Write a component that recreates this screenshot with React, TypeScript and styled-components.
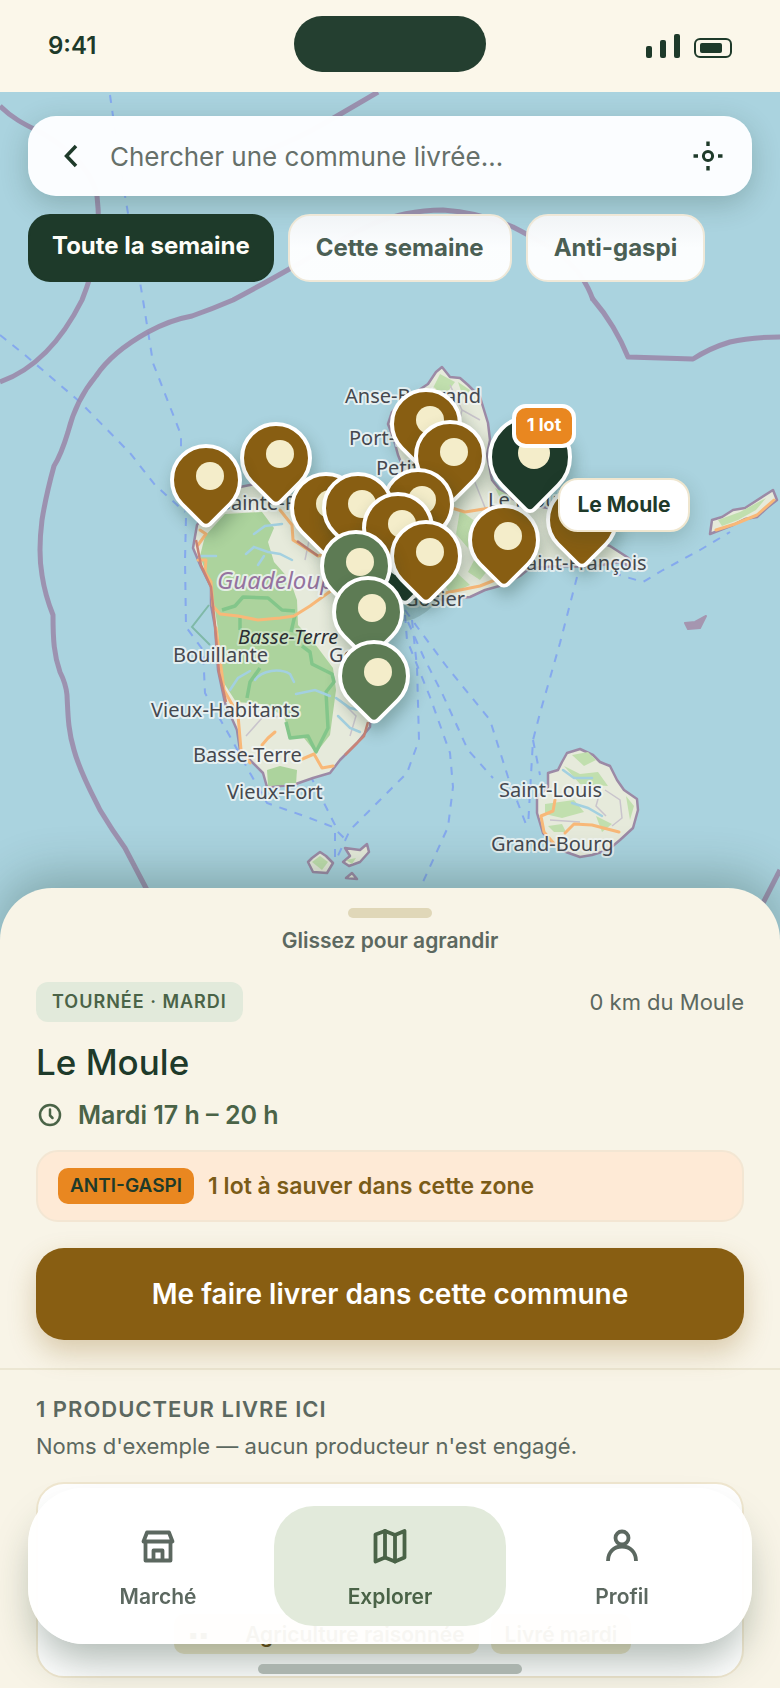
import React from "react";
import styled, { createGlobalStyle, css } from "styled-components";

const color = {
  cream: "#fbf7ea",
  sheet: "#f8f4e7",
  forest: "#1e3a2a",
  moss: "#4a6347",
  slate: "#5c6860",
  brown: "#885e12",
  leaf: "#5d7b54",
  orange: "#e98720",
  sage: "#e2eadb",
  line: "#efe6cf",
  dot: "#f4edca",
};

const GlobalStyle = createGlobalStyle`
  * { box-sizing: border-box; }
  body {
    margin: 0;
    background: ${color.sheet};
    color: ${color.forest};
    font-family: Inter, "Liberation Sans", sans-serif;
  }
  button, input { font-family: inherit; }
  h1, h2, p { margin: 0; padding: 0; }
`;

const Screen = styled.div`
  min-height: 100vh;
  display: flex;
  flex-direction: column;
  overflow: hidden;
`;

/* Status bar */

const StatusBar = styled.header`
  display: grid;
  grid-template-columns: 1fr auto 1fr;
  align-items: center;
  height: 92px;
  padding: 0 48px;
  background: ${color.cream};
`;

const Clock = styled.time`
  font-size: 24px;
  font-weight: 600;
  line-height: 28px;
`;

const Island = styled.div`
  width: 192px;
  height: 56px;
  margin-bottom: 4px;
  border-radius: 28px;
  background: #243f30;
`;

const StatusIcons = styled.div`
  display: flex;
  align-items: flex-end;
  justify-content: flex-end;
  gap: 14px;
`;

const Signal = styled.div`
  display: flex;
  align-items: flex-end;
  gap: 8px;
`;

const SignalBar = styled.span<{ $height: number }>`
  width: 6px;
  height: ${(p) => p.$height}px;
  border-radius: 2px;
  background: ${color.forest};
`;

const Battery = styled.div`
  width: 38px;
  height: 20px;
  padding: 3px 4px;
  border: 2px solid ${color.forest};
  border-radius: 6px;
`;

const BatteryLevel = styled.div`
  width: 22px;
  height: 10px;
  border-radius: 2px;
  background: ${color.forest};
`;

/* Map */

const MapArea = styled.section`
  position: relative;
  height: 856px;
  flex: none;
  overflow: hidden;
  background: #aad3df;
`;

const MapDrawing = styled.svg`
  position: absolute;
  inset: 0;
  width: 100%;
  height: 100%;
`;

const MapControls = styled.div`
  position: relative;
  z-index: 2;
  display: flex;
  flex-direction: column;
  gap: 18px;
  padding: 24px 28px;
`;

const SearchBar = styled.div`
  display: flex;
  align-items: center;
  gap: 14px;
  height: 80px;
  padding: 0 20px;
  border-radius: 28px;
  background: rgba(253, 254, 255, 0.98);
  box-shadow: 0 8px 28px rgba(30, 58, 42, 0.24);
`;

const IconButton = styled.button`
  display: grid;
  place-items: center;
  flex: none;
  width: 48px;
  height: 48px;
  padding: 0;
  border: 0;
  background: none;
  color: ${color.forest};
`;

const SearchInput = styled.input`
  flex: 1;
  min-width: 0;
  padding: 2px 0 0;
  border: 0;
  outline: 0;
  background: none;
  color: ${color.forest};
  font-size: 26px;
  line-height: 36px;
  &::placeholder {
    color: #66706a;
    opacity: 1;
  }
`;

const Chips = styled.div`
  display: flex;
  gap: 14px;
`;

const Chip = styled.button<{ $active?: boolean }>`
  height: 68px;
  padding: 0 26px;
  border: 2px solid #efe8d8;
  border-radius: 22px;
  background: linear-gradient(rgba(243, 245, 247, 0.98), rgba(253, 254, 255, 0.98) 50%);
  color: #4b5f54;
  font-size: 24px;
  font-weight: 700;
  line-height: 28px;
  white-space: nowrap;
  ${(p) =>
    p.$active &&
    css`
      padding: 0 22px 4px;
      border-color: ${color.forest};
      background: ${color.forest};
      color: #fdfdf8;
    `}
`;

const PinButton = styled.button<{ $x: number; $y: number; $size: number }>`
  position: absolute;
  left: calc(50% + ${(p) => p.$x - p.$size / 2 - 390}px);
  top: ${(p) => p.$y - p.$size / 2 - 92}px;
  width: ${(p) => p.$size}px;
  height: ${(p) => p.$size}px;
  padding: 0;
  border: 0;
  background: none;
`;

const PinShape = styled.span<{ $tone: string }>`
  display: block;
  width: 100%;
  height: 100%;
  border: 4px solid #fff;
  border-radius: 50% 50% 50% 8px;
  background: ${(p) => p.$tone};
  box-shadow: -4px 8px 16px rgba(30, 58, 42, 0.3);
  transform: rotate(-45deg);
`;

const PinDot = styled.span<{ $size: number }>`
  position: absolute;
  left: calc(50% + 4px - ${(p) => p.$size / 2}px);
  top: calc(50% - 4px - ${(p) => p.$size / 2}px);
  width: ${(p) => p.$size}px;
  height: ${(p) => p.$size}px;
  border-radius: 50%;
  background: ${color.dot};
`;

const LotBadge = styled.span`
  position: absolute;
  left: calc(50% + 122px);
  top: 312px;
  width: 64px;
  height: 44px;
  border: 4px solid #fff;
  border-radius: 14px;
  background: ${color.orange};
  color: #fff;
  font-size: 18px;
  font-weight: 700;
  line-height: 34px;
  text-align: center;
`;

const PinLabel = styled.span`
  position: absolute;
  left: calc(50% + 168px);
  top: 386px;
  width: 132px;
  height: 54px;
  border: 2px solid ${color.line};
  border-radius: 20px;
  background: #fff;
  box-shadow: 0 6px 20px rgba(30, 58, 42, 0.2);
  color: ${color.forest};
  font-size: 21px;
  font-weight: 700;
  line-height: 50px;
  text-align: center;
`;

/* Bottom sheet */

const Sheet = styled.main`
  position: relative;
  z-index: 3;
  flex: 1;
  margin-top: -60px;
  padding-bottom: 10px;
  border-radius: 52px 52px 0 0;
  background: ${color.sheet};
  box-shadow: 0 -12px 48px rgba(30, 58, 42, 0.3);
`;

const Grip = styled.button`
  display: flex;
  flex-direction: column;
  align-items: center;
  gap: 10px;
  width: 100%;
  padding: 20px 0 0;
  border: 0;
  background: none;
  color: ${color.slate};
  font-size: 21px;
  font-weight: 600;
  line-height: 26px;
`;

const GripBar = styled.span`
  width: 84px;
  height: 10px;
  border-radius: 5px;
  background: #e0d7b8;
`;

const Place = styled.section`
  display: flex;
  flex-direction: column;
  padding: 28px 36px;
  border-bottom: 2px solid #ece7d3;
`;

const PlaceTop = styled.div`
  display: flex;
  align-items: center;
  justify-content: space-between;
`;

const RoundTag = styled.span`
  padding: 0 16px;
  border-radius: 12px;
  background: ${color.sage};
  color: ${color.moss};
  font-size: 18px;
  font-weight: 600;
  letter-spacing: 1px;
  line-height: 40px;
`;

const Distance = styled.span`
  color: ${color.slate};
  font-size: 22px;
  line-height: 28px;
`;

const PlaceName = styled.h1`
  margin-top: 16px;
  font-size: 35px;
  font-weight: 500;
  line-height: 48px;
`;

const Schedule = styled.p`
  display: flex;
  align-items: center;
  gap: 14px;
  margin-top: 12px;
  color: ${color.moss};
  font-size: 25px;
  font-weight: 600;
  line-height: 34px;
`;

const RescueBanner = styled.div`
  display: flex;
  align-items: center;
  gap: 14px;
  height: 72px;
  margin-top: 18px;
  padding: 0 20px;
  border: 2px solid #f3e6d3;
  border-radius: 22px;
  background: #feead6;
  color: #7a5c18;
  font-size: 23px;
  font-weight: 600;
`;

const RescueTag = styled.span`
  padding: 0 12px;
  border-radius: 10px;
  background: ${color.orange};
  color: ${color.forest};
  font-size: 19px;
  font-weight: 600;
  line-height: 36px;
`;

const DeliverButton = styled.button`
  height: 92px;
  margin-top: 26px;
  padding: 0;
  border: 0;
  border-radius: 28px;
  background: ${color.brown};
  box-shadow: 0 12px 28px rgba(136, 94, 18, 0.28);
  color: #fff;
  font-size: 28px;
  font-weight: 600;
  line-height: 36px;
`;

const Producers = styled.section`
  padding: 24px 36px 0;
`;

const ProducersTitle = styled.h2`
  color: ${color.slate};
  font-size: 22px;
  font-weight: 600;
  letter-spacing: 1px;
  line-height: 30px;
`;

const ProducersNote = styled.p`
  margin-top: 6px;
  color: ${color.slate};
  font-size: 22px;
  line-height: 32px;
`;

const ProducerCard = styled.article`
  display: flex;
  align-items: flex-end;
  gap: 12px;
  height: 196px;
  margin-top: 20px;
  padding: 22px 136px;
  border: 2px solid ${color.line};
  border-radius: 28px;
  background: #fff;
`;

const ProducerTag = styled.span`
  display: flex;
  align-items: center;
  gap: 36px;
  height: 40px;
  padding: 0 14px;
  border-radius: 10px;
  background: #efe8cb;
  color: #6b4c12;
  font-size: 21px;
  font-weight: 600;
  white-space: nowrap;
`;

/* Tab bar */

const TabBar = styled.nav`
  position: fixed;
  z-index: 4;
  right: 28px;
  bottom: 44px;
  left: 28px;
  display: grid;
  grid-template-columns: repeat(3, 1fr);
  padding: 18px 14px;
  border-radius: 56px;
  background: rgba(255, 255, 255, 0.95);
  box-shadow: 0 24px 40px -8px rgba(30, 58, 42, 0.36);
`;

const Tab = styled.a<{ $active?: boolean }>`
  display: flex;
  flex-direction: column;
  align-items: center;
  gap: 16px;
  height: 120px;
  padding-top: 21px;
  border-radius: 40px;
  background: ${(p) => (p.$active ? color.sage : "transparent")};
  color: ${(p) => (p.$active ? color.moss : color.slate)};
  font-size: 21px;
  font-weight: 600;
  line-height: 28px;
  text-decoration: none;
`;

const HomeIndicator = styled.div`
  position: fixed;
  z-index: 4;
  bottom: 14px;
  left: calc(50% - 132px);
  width: 264px;
  height: 10px;
  border-radius: 5px;
  background: #abb4ae;
`;

/* Data */

const tones = { brown: color.brown, green: color.leaf, dark: color.forest };

type Pin = { x: number; y: number; tone: keyof typeof tones; name: string; size?: number };

const pins: Pin[] = [
  { x: 426, y: 424, tone: "brown", name: "Anse-Bertrand" },
  { x: 450, y: 456, tone: "brown", name: "Petit-Canal" },
  { x: 276, y: 458, tone: "brown", name: "Sainte-Rose" },
  { x: 206, y: 480, tone: "brown", name: "Deshaies" },
  { x: 418, y: 504, tone: "brown", name: "Morne-à-l'Eau" },
  { x: 326, y: 508, tone: "brown", name: "Lamentin" },
  { x: 358, y: 508, tone: "brown", name: "Baie-Mahault" },
  { x: 582, y: 520, tone: "brown", name: "Saint-François" },
  { x: 405, y: 557, tone: "dark", name: "Pointe-à-Pitre" },
  { x: 398, y: 528, tone: "brown", name: "Les Abymes" },
  { x: 504, y: 540, tone: "brown", name: "Sainte-Anne" },
  { x: 426, y: 556, tone: "brown", name: "Le Gosier" },
  { x: 356, y: 566, tone: "green", name: "Petit-Bourg" },
  { x: 368, y: 612, tone: "green", name: "Goyave" },
  { x: 374, y: 676, tone: "green", name: "Capesterre-Belle-Eau" },
  { x: 530, y: 457, tone: "dark", name: "Le Moule", size: 84 },
];

const towns: [string, number, number][] = [
  ["Anse-Bertrand", 345, 403],
  ["Port-Louis", 349, 445],
  ["Petit-Canal", 376, 475],
  ["Sainte-Rose", 220, 510],
  ["Le Moule", 488, 507],
  ["Saint-François", 515, 570],
  ["Gosier", 404, 606],
  ["Bouillante", 173, 662],
  ["Goyave", 329, 662],
  ["Vieux-Habitants", 151, 717],
  ["Basse-Terre", 193, 762],
  ["Vieux-Fort", 227, 799],
  ["Saint-Louis", 499, 797],
  ["Grand-Bourg", 491, 851],
];

const boundaries = [
  "M0 106C12 118 24 124 36 130S90 160 97 196C102 240 94 270 82 300Q50 364 0 382",
  "M378 92L337 116Q280 150 240 158",
  "M593 300C580 262 550 246 513 227Q478 212 443 210Q405 210 370 225C320 250 290 270 233 300Q212 309 192 316Q170 320 148 332Q112 352 96 376Q76 400 68 432Q61 455 54 466Q46 495 42 520Q38 552 42 575Q45 595 53 615C53 640 54 655 60 672Q66 684 67 695C68 715 68 730 74 750C80 772 90 790 100 810Q112 830 125 848L147 890",
  "M592 298Q604 312 613 327Q622 342 628 357L693 359Q710 348 730 342Q750 337 780 337",
  "M780 870L762 905",
];

const ferries = [
  "M110 95L113 116L125 196L140 282L143 300L151 350L153 363L181 435L181 470L186 517L185 560L186 627L203 650L205 693L228 733L250 773L267 803L307 817L333 827L348 842",
  "M0 335L25 355L80 402L130 453L155 485L185 512",
  "M577 577L560 643L540 713L533 740L531 775L528 827",
  "M533 740L540 775",
  "M405 610L418 628L447 667L490 720L508 777L527 827",
  "M408 622L424 658L442 693L468 750L493 778",
  "M405 615L407 640L430 697L450 753L453 787L448 827L423 882",
  "M412 620L417 667L419 740L407 773L380 800L350 830L335 862",
  "M310 775L335 825L335 862",
  "M613 573L643 582L663 570L700 550L730 532",
];

const coasts = [
  "M197 525L193 548L201 567L211 587L211 605L215 627L218 670L225 703L237 730L240 750L263 773L267 787L293 785L313 778L330 773L340 760L357 743L370 727L372 690L365 660L362 640L374 610L390 585L384 565L388 540L380 510L350 492L330 478L300 500L255 484L235 488L215 500Z",
  "M442 367L436 372L428 384L416 392L405 398L392 412L388 424L394 440L398 455L404 470L400 490L392 505L396 530L386 555L400 575L420 592L440 600L470 597L485 590L503 585L520 576L530 568L560 566L590 567L620 562L640 570L627 557L610 546L593 540L560 510L530 505L513 499L500 490L492 480L487 455L490 440L488 423L484 410L480 397L468 385L460 378L450 377Z",
  "M548 773L558 770L562 762L567 753L580 749L593 755L600 762L610 766L617 780L624 790L637 799L638 810L633 828L620 840L608 850L592 855L580 857L566 852L556 846L543 833L537 813L537 797L548 787Z",
  "M710 534L712 520L722 517L733 510L745 508L773 490L777 500L768 507L757 517L745 519L733 525Z",
  "M308 862L312 858L320 852L326 856L333 863L327 873L313 872Z",
  "M343 862L350 856L345 848L360 850L367 844L369 852L360 862L349 866Z",
  "M346 878L352 873L357 879Z",
];

const forests = [
  "M205 536L225 514L262 512L274 528L268 542L274 562L290 580L297 600L298 625L312 640L333 668L336 690L330 735L316 753L304 738L290 738L284 716L262 704L236 702L222 680L218 630L212 590L200 556Z",
  "M267 770L280 766L297 770L296 784L268 786Z",
];

const groves = [
  "M440 374L455 382L446 394L432 390Z",
  "M458 382L470 390L464 400Z",
  "M460 510L476 522L468 548L456 534Z",
  "M482 545L496 560L480 580L468 572Z",
  "M495 488L510 496L504 506Z",
  "M470 585L450 594L442 580L456 572Z",
  "M572 755L588 752L596 760L584 766Z",
  "M564 766L580 774L598 772L608 786L580 784Z",
  "M545 804L574 800L584 812L562 818L545 814Z",
  "M596 816L612 824L602 832Z",
  "M626 796L634 806L630 820Z",
  "M548 826L562 824L566 832L554 832Z",
  "M718 520L740 512L766 498L756 510L738 520L722 526Z",
  "M312 862L320 856L328 862L322 870Z",
  "M346 860L356 858L352 864Z",
];

const roads = [
  "M200 530L206 534L198 545M198 560H206L205 572L211 582L213 606L220 614L238 616L258 620L280 618L294 616L310 606L332 590",
  "M216 628L224 690L238 715L241 750L250 763",
  "M280 510L292 525L293 540L318 556L345 548",
  "M452 508L465 512L490 508",
  "M262 745L268 738L275 732",
  "M300 760L314 754L322 768L333 766",
  "M435 595L460 590L480 586L500 578",
  "M555 800L553 811L541 816L544 832L556 846",
  "M565 833L574 824L592 825L619 832",
  "M716 530L735 524L757 515L774 500",
];

const rivers = [
  "M254 534L265 526L282 524",
  "M246 554L254 547L268 552L280 554L292 560",
  "M258 565L264 556",
  "M200 556H216",
  "M230 690L238 678L250 671",
  "M255 680C262 670 280 668 290 674L294 682",
  "M296 694L315 690L330 696",
  "M563 770L574 778L592 778",
  "M572 803L588 808L602 816",
  "M338 716L350 728L360 732M336 698L350 708L368 712",
];

/* Icons */

const BackIcon = () => (
  <svg width="24" height="28" viewBox="0 0 24 28" fill="none" stroke="currentColor" strokeWidth="3.5" aria-hidden="true">
    <path d="M16 4L6.500 14L16 24" />
  </svg>
);

const LocateIcon = () => (
  <svg width="30" height="30" viewBox="0 0 30 30" fill="none" stroke="currentColor" strokeWidth="3" aria-hidden="true">
    <circle cx="15" cy="15" r="4.600" />
    <path d="M15 .5v4.500M15 25v4.500M.5 15H5M25 15h4.500" strokeWidth="3.4" />
  </svg>
);

const ClockIcon = () => (
  <svg width="28" height="28" viewBox="0 0 28 28" fill="none" stroke="currentColor" strokeWidth="2.5" strokeLinecap="round" aria-hidden="true">
    <circle cx="14" cy="14" r="10" />
    <path d="M14 8.500V14.500L16.500 17" />
  </svg>
);

const tabIcon = {
  width: 40,
  height: 40,
  viewBox: "0 0 40 40",
  fill: "none",
  stroke: "currentColor",
  strokeWidth: 3.8,
  strokeLinejoin: "round" as const,
  strokeLinecap: "round" as const,
  "aria-hidden": true,
};

const ShopIcon = () => (
  <svg {...tabIcon}>
    <path d="M9 5.500H31L34.500 14.500H5.500Z" />
    <path d="M7.500 15V33.500H32.500V15" />
    <path d="M15.500 33V23.500H24.500V33" />
  </svg>
);

const MapIcon = () => (
  <svg {...tabIcon}>
    <path d="M5.500 7.500L15 4L25 8L34.500 4V30.500L25 34.500L15 30.500L5.500 34.500Z" />
    <path d="M15 4V30.500M25 8V34.500" />
  </svg>
);

const ProfileIcon = () => (
  <svg {...tabIcon} strokeLinecap="butt">
    <circle cx="20" cy="11" r="6.500" />
    <path d="M6 34C6 25 12 19.500 20 19.500S34 25 34 34" />
  </svg>
);

const IslandMap = () => (
  <MapDrawing viewBox="0 92 780 856" preserveAspectRatio="xMidYMin slice" role="img" aria-label="Carte de la Guadeloupe">
    <g fill="none" stroke="#7c9ff2" strokeWidth="2" strokeDasharray="8 8" opacity=".8">
      {ferries.map((d) => (
        <path key={d} d={d} />
      ))}
    </g>
    <g fill="none" stroke="#9a86a8" strokeWidth="5" opacity=".85" strokeLinejoin="round">
      {boundaries.map((d) => (
        <path key={d} d={d} />
      ))}
    </g>
    <g fill="#e6eadb" stroke="#9c8aa6" strokeWidth="2.5" strokeLinejoin="round">
      {coasts.map((d) => (
        <path key={d} d={d} />
      ))}
    </g>
    <path d="M685 623L695 622L706 616L700 628L688 629Z" fill="#a596b0" stroke="#a596b0" strokeWidth="2" strokeLinejoin="round" />
    <g fill="#acd39d">
      {forests.map((d) => (
        <path key={d} d={d} />
      ))}
    </g>
    <g fill="#c1dfae">
      {groves.map((d) => (
        <path key={d} d={d} />
      ))}
    </g>
    <path
      d="M222 610L235 606L243 597L268 598L282 610L295 611M295 615L291 632M302 646L310 652L312 664L332 674L334 682L326 692L328 728L316 752L308 736L290 738L286 722M260 668L250 682L247 698M240 618V630"
      fill="none"
      stroke="#83c68a"
      strokeWidth="3.5"
      strokeLinejoin="round"
    />
    <path d="M209 605L192 627L210 645" fill="none" stroke="#7fb9a8" strokeWidth="2" />
    <g fill="none" stroke="#c9c4cc" strokeWidth="1.5">
      <path d="M450 385L462 410L480 420M462 410L455 440M470 470L490 520L515 530M520 510L535 560M605 790L620 800L622 818L612 826M550 820L580 822M600 792L596 806L606 816M246 736L262 718L282 716M340 700L356 716L350 736M300 520L310 536L305 560" />
    </g>
    <g fill="none" stroke="#a3d0e0" strokeWidth="2.5" strokeLinecap="round">
      {rivers.map((d) => (
        <path key={d} d={d} />
      ))}
    </g>
    <g fill="none" stroke="#f8b878" strokeWidth="3" strokeLinejoin="round" strokeLinecap="round">
      {roads.map((d) => (
        <path key={d} d={d} />
      ))}
    </g>
    <path d="M297 541L318 556M368 722L364 736L345 755M196 540L201 565L211 587L215 625L219 672L226 702" fill="none" stroke="#c98477" strokeWidth="2.5" />
    <g
      fontFamily="Noto Sans, sans-serif"
      fontSize="20"
      fill="#45484f"
      stroke="#f4f7f7"
      strokeOpacity=".8"
      strokeWidth="4"
      strokeLinejoin="round"
      paintOrder="stroke"
    >
      {towns.map(([name, x, y]) => (
        <text key={name} x={x} y={y}>
          {name}
        </text>
      ))}
      <text x="238" y="644" fontStyle="italic" fill="#2c2f33" strokeOpacity=".4">
        Basse-Terre
      </text>
      <text x="217" y="589" fontSize="24" fontStyle="italic" fill="#94739f">
        Guadeloupe
      </text>
    </g>
    <circle cx="396" cy="572" r="50" fill={color.forest} opacity=".16" />
  </MapDrawing>
);

export default function App() {
  return (
    <>
      <GlobalStyle />
      <Screen>
        <StatusBar>
          <Clock>9:41</Clock>
          <Island />
          <StatusIcons>
            <Signal>
              <SignalBar $height={12} />
              <SignalBar $height={18} />
              <SignalBar $height={24} />
            </Signal>
            <Battery>
              <BatteryLevel />
            </Battery>
          </StatusIcons>
        </StatusBar>

        <MapArea>
          <IslandMap />
          {pins.map((pin) => {
            const size = pin.size ?? 72;
            return (
              <PinButton key={pin.name} $x={pin.x} $y={pin.y} $size={size} aria-label={pin.name}>
                <PinShape $tone={tones[pin.tone]} />
                <PinDot $size={pin.size ? 32 : 28} />
              </PinButton>
            );
          })}
          <LotBadge>1 lot</LotBadge>
          <PinLabel>Le Moule</PinLabel>
          <MapControls>
            <SearchBar>
              <IconButton aria-label="Retour">
                <BackIcon />
              </IconButton>
              <SearchInput type="text" aria-label="Commune" placeholder="Chercher une commune livrée…" />
              <IconButton aria-label="Me localiser">
                <LocateIcon />
              </IconButton>
            </SearchBar>
            <Chips>
              <Chip $active>Toute la semaine</Chip>
              <Chip>Cette semaine</Chip>
              <Chip>Anti-gaspi</Chip>
            </Chips>
          </MapControls>
        </MapArea>

        <Sheet>
          <Grip>
            <GripBar />
            Glissez pour agrandir
          </Grip>
          <Place>
            <PlaceTop>
              <RoundTag>TOURNÉE · MARDI</RoundTag>
              <Distance>0 km du Moule</Distance>
            </PlaceTop>
            <PlaceName>Le Moule</PlaceName>
            <Schedule>
              <ClockIcon />
              Mardi 17 h – 20 h
            </Schedule>
            <RescueBanner>
              <RescueTag>ANTI-GASPI</RescueTag>
              1 lot à sauver dans cette zone
            </RescueBanner>
            <DeliverButton>Me faire livrer dans cette commune</DeliverButton>
          </Place>
          <Producers>
            <ProducersTitle>1 PRODUCTEUR LIVRE ICI</ProducersTitle>
            <ProducersNote>Noms d'exemple — aucun producteur n'est engagé.</ProducersNote>
            <ProducerCard>
              <ProducerTag>
                <span>▪▪</span>
                Agriculture raisonnée
              </ProducerTag>
              <ProducerTag>Livré mardi</ProducerTag>
            </ProducerCard>
          </Producers>
        </Sheet>

        <TabBar>
          <Tab href="#marche">
            <ShopIcon />
            Marché
          </Tab>
          <Tab href="#explorer" $active>
            <MapIcon />
            Explorer
          </Tab>
          <Tab href="#profil">
            <ProfileIcon />
            Profil
          </Tab>
        </TabBar>
        <HomeIndicator />
      </Screen>
    </>
  );
}
